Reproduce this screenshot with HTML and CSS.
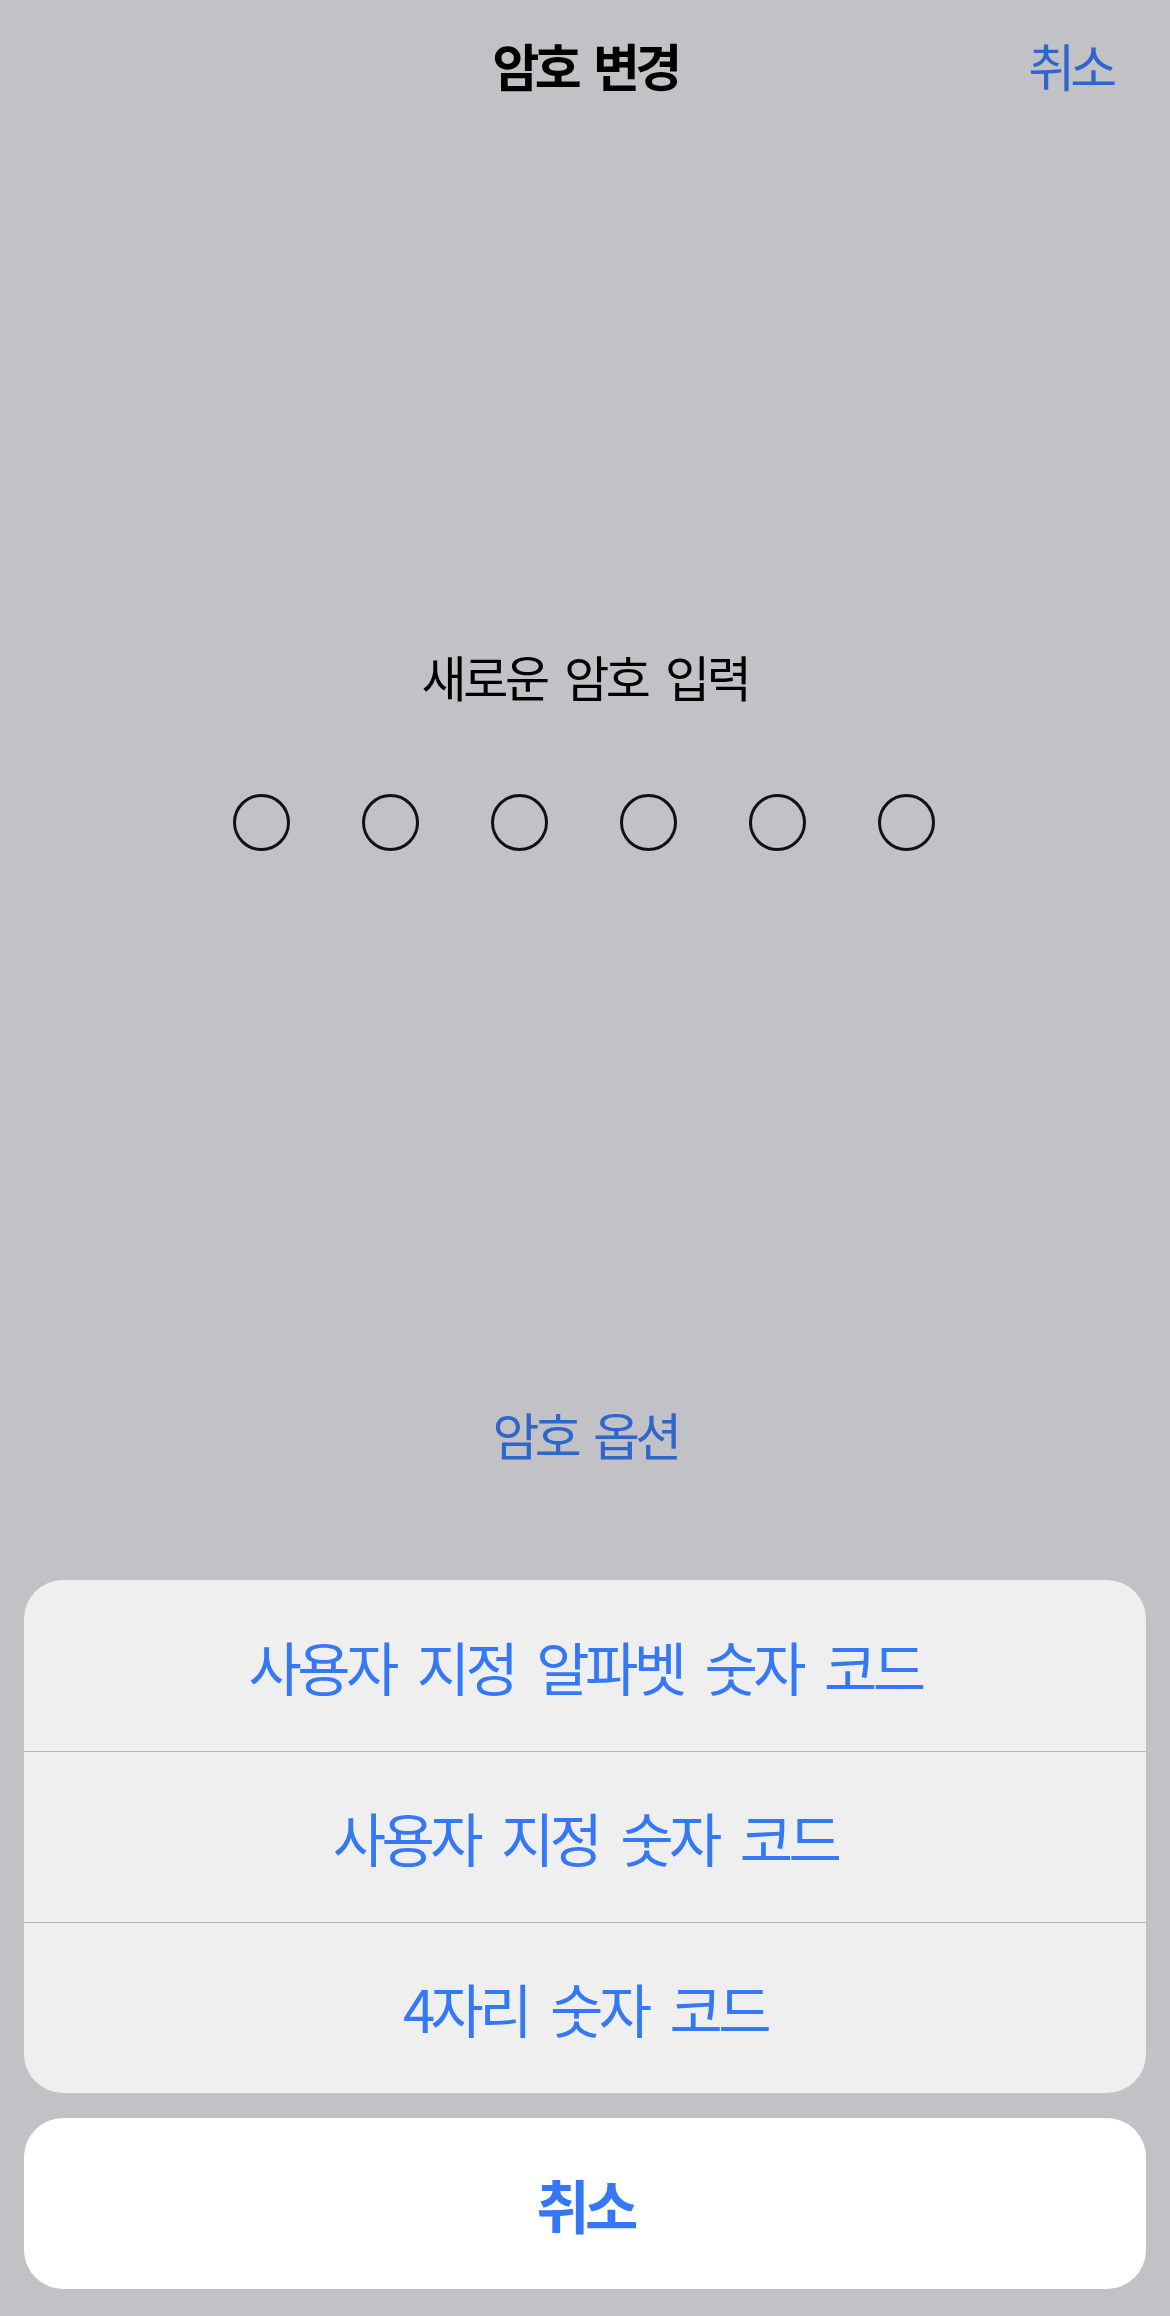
FILE: index.html
```html
<!DOCTYPE html>
<html lang="ko">
<head>
  <meta charset="UTF-8">
  <title>암호 변경</title>
  <link rel="stylesheet" href="styles.css">
</head>
<body>

<div class="screen">
  <div class="nav">
    <span></span>
    <h1 class="nav-title">암호 변경</h1>
    <a href="#" class="nav-cancel">취소</a>
  </div>

  <p class="prompt">새로운 암호 입력</p>

  <div class="dots">
    <span class="dot"></span>
    <span class="dot"></span>
    <span class="dot"></span>
    <span class="dot"></span>
    <span class="dot"></span>
    <span class="dot"></span>
  </div>

  <a href="#" class="options-link">암호 옵션</a>

  <div class="sheet">
    <div class="sheet-group">
      <button class="sheet-item">사용자 지정 알파벳 숫자 코드</button>
      <button class="sheet-item">사용자 지정 숫자 코드</button>
      <button class="sheet-item">4자리 숫자 코드</button>
    </div>
    <button class="sheet-cancel">취소</button>
  </div>
</div>

</body>
</html>
```

FILE: styles.css
```css
body { margin: 0; background: #c1c1c6; font-family: "Noto Sans CJK KR", "Noto Sans", sans-serif; color: #000; }
.screen { display: flex; flex-direction: column; height: 2316px; }

.nav { display: grid; grid-template-columns: 1fr auto 1fr; align-items: center; height: 130px; padding: 0 58px; }
.nav-title { margin: 0; font-size: 51px; font-weight: 600; letter-spacing: -0.09em; word-spacing: 0.12em; line-height: 60px; }
.nav-cancel { justify-self: end; font-size: 51px; color: #2e66cb; text-decoration: none; letter-spacing: -0.1em; line-height: 60px; }

.prompt { margin: 516px 0 0; text-align: center; font-size: 49px; line-height: 60px; letter-spacing: -0.07em; word-spacing: 0.15em; }

.dots { display: flex; justify-content: center; gap: 72px; margin-top: 88px; padding-right: 3px; }
.dot { width: 51px; height: 51px; border: 3px solid #111; border-radius: 50%; }

.options-link { margin-top: 553px; text-align: center; font-size: 51px; line-height: 60px; color: #2e66cb; text-decoration: none; letter-spacing: -0.09em; word-spacing: 0.12em; }

.sheet { margin-top: auto; padding: 0 24px 27px; display: flex; flex-direction: column; gap: 25px; }
.sheet-group { background: #efeff0; border-radius: 39px; overflow: hidden; display: flex; flex-direction: column; }
.sheet-item, .sheet-cancel {
  height: 171px; border: none; background: none; font-family: inherit; font-size: 58px;
  color: #3478f6; letter-spacing: -0.08em; word-spacing: 0.18em; cursor: pointer; padding: 0;
}
.sheet-item + .sheet-item { border-top: 1px solid #b4b4b8; }
.sheet-cancel { background: #fff; border-radius: 39px; font-weight: 600; }
```
